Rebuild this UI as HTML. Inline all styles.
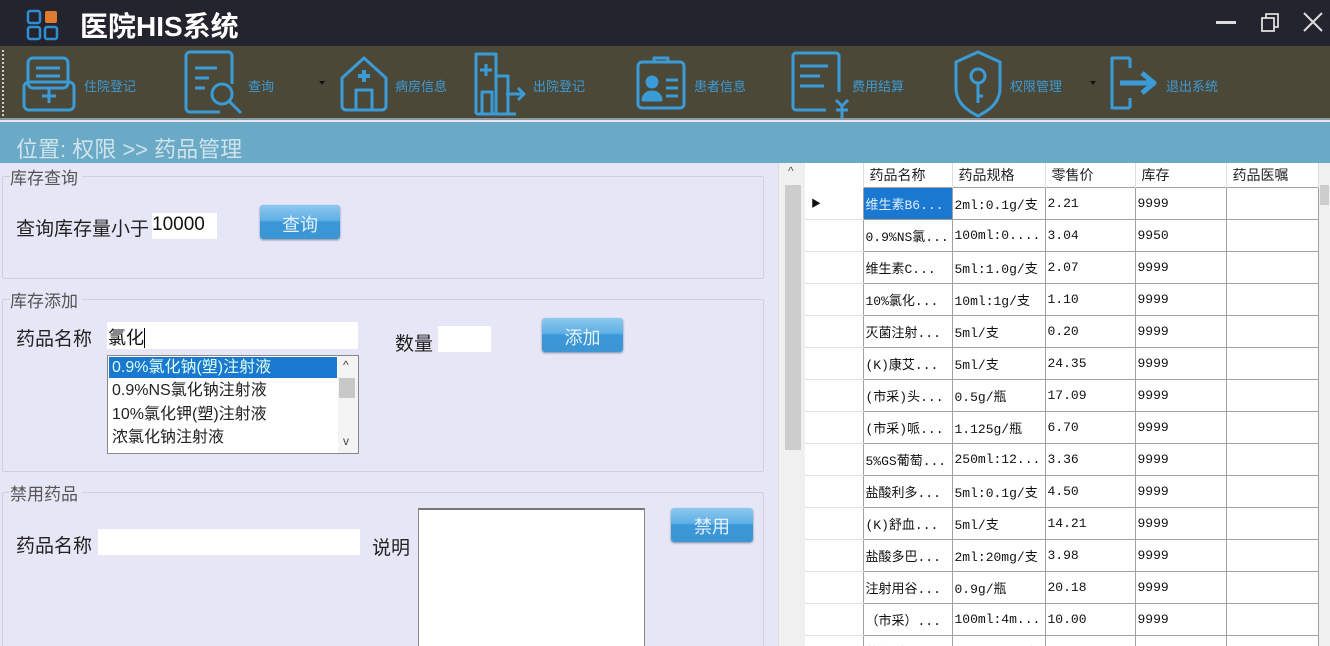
<!DOCTYPE html>
<html><head><meta charset="utf-8"><style>
*{margin:0;padding:0;box-sizing:border-box}
html,body{width:1330px;height:646px;overflow:hidden}
body{position:relative;font-family:"Liberation Sans","Noto Sans CJK SC",sans-serif;background:#e6e6f6}
.a{position:absolute}
#title{left:0;top:0;width:1330px;height:46px;background:#23242e}
#tb{left:0;top:46px;width:1330px;height:74px;background:#4b4838;border-bottom:2px solid #8a9aa0}
#bc{left:0;top:122px;width:1330px;height:41px;background:#6aaac6;color:#cfe3ec;font-size:22px;padding:10px 0 0 16px}
.tl{color:#3d9ad4;font-size:13px;position:absolute;top:76px}
.lbl{font-size:19px;color:#222;position:absolute}
.inp{position:absolute;background:#fff}
.btn{position:absolute;background:linear-gradient(#8cc8ee 0%,#5fb0e6 45%,#3b97d8 50%,#3c96d4 100%);border-radius:3px;color:#e8f2fa;font-size:18px;text-align:center;box-shadow:0 1px 2px #7a8aa0}
.grp{position:absolute;border:1px solid #cfd0e0;border-radius:2px}
.gt{position:absolute;font-size:17px;color:#555;background:#e6e6f6;padding-right:4px}
table{border-collapse:collapse;position:absolute;left:805px;top:163px;font-family:"Liberation Mono","Noto Sans CJK SC",monospace;font-size:13px}
td{border:1px solid #a0a0a0;height:32px;background:#fff;padding-left:2px;white-space:nowrap;color:#111}
th{height:24px;font-weight:normal;text-align:left;padding-left:6px;font-family:"Liberation Sans","Noto Sans CJK SC",sans-serif;font-size:14px;background:#fff;border-right:1px solid #ddd;color:#222}
td.rh{border:none;border-bottom:1px solid #e0e0e0;background:#fff}
</style></head><body>
<div id="title" class="a">
<svg class="a" style="left:26px;top:9px" width="34" height="32"><g fill="none" stroke="#2f8ecf" stroke-width="2.5"><rect x="2" y="2" width="12" height="12" rx="2"/><rect x="2" y="18" width="12" height="12" rx="2"/><rect x="19" y="18" width="12" height="12" rx="2"/></g><rect x="19" y="2" width="12" height="12" rx="2" fill="#e07a30"/></svg>
<div class="a" style="left:80px;top:5px;color:#fff;font-size:28px;font-weight:bold">医院HIS系统</div>
<div class="a" style="left:1216px;top:21px;width:20px;height:3px;background:#ddd"></div>
<svg class="a" style="left:1260px;top:11px" width="20" height="22"><g fill="none" stroke="#ddd" stroke-width="1.8"><rect x="2" y="7" width="12" height="13"/><path d="M6 7V3h12v13h-4"/></g></svg>
<svg class="a" style="left:1302px;top:11px" width="22" height="22"><path d="M2 2L20 20M20 2L2 20" stroke="#ddd" stroke-width="2"/></svg>
</div>
<div id="tb" class="a">
<div class="a" style="left:2px;top:4px;width:3px;height:66px;border-left:2px dotted #ccc"></div>
<svg class="a" style="left:0;top:0" width="1330" height="74"><g fill="none" stroke="#3a9bd6" stroke-width="3" stroke-linejoin="round">
<rect x="28" y="12" width="40" height="30" rx="5"/><path d="M36 22h24M36 30h24"/><rect x="24" y="36" width="50" height="28" rx="5"/><path d="M49 43v14M42 50h14"/>
<path d="M220 66h-30a4 4 0 0 1-4-4V10a4 4 0 0 1 4-4h38a4 4 0 0 1 4 4v28"/><path d="M195 22h22M195 32h14M195 42h10"/><circle cx="222" cy="48" r="10"/><path d="M229 55l12 12"/>
<path d="M342 32l22-20 22 20v28a4 4 0 0 1-4 4h-36a4 4 0 0 1-4-4z"/><rect x="356" y="44" width="16" height="20"/><path d="M364 24v12M358 30h12" stroke-width="4"/>
<path d="M476 68V8h20v60M496 30h12v38M476 68h40"/><path d="M486 18v12M480 24h12"/><rect x="482" y="46" width="10" height="22"/><path d="M506 48h18M518 42l6 6-6 6"/>
<rect x="638" y="16" width="46" height="46" rx="4"/><circle cx="652" cy="36" r="5" fill="#3a9bd6"/><path d="M643 54a9 8 0 0 1 18 0z" fill="#3a9bd6"/><path d="M666 34h12M666 42h12M666 50h12"/><path d="M654 16v-4h14v4"/>
<path d="M826 64h-30a3 3 0 0 1-3-3V10a3 3 0 0 1 3-3h40a3 3 0 0 1 3 3v36"/><path d="M800 20h28M800 30h20M800 40h24"/><path d="M836 54l6 6 6-6M842 60v12M836 64h12"/>
<path d="M978 6l22 10v26c0 14-10 22-22 28-12-6-22-14-22-28V16z"/><circle cx="978" cy="30" r="7"/><path d="M978 37v20M978 50h5"/>
<path d="M1130 12h-18v50h18M1130 12v10M1130 62v-10"/><path d="M1120 37h30M1142 27l12 10-12 10" stroke-width="5"/>
</g><path d="M319 35h6l-3 4z M1090 35h6l-3 4z" fill="#111"/></svg>
<span class="tl" style="left:84px;top:30px">住院登记</span>
<span class="tl" style="left:248px;top:30px">查询</span>
<span class="tl" style="left:395px;top:30px">病房信息</span>
<span class="tl" style="left:533px;top:30px">出院登记</span>
<span class="tl" style="left:694px;top:30px">患者信息</span>
<span class="tl" style="left:852px;top:30px">费用结算</span>
<span class="tl" style="left:1010px;top:30px">权限管理</span>
<span class="tl" style="left:1166px;top:30px">退出系统</span>
</div>
<div id="bc" class="a">位置:&nbsp;权限 &gt;&gt; 药品管理</div>

<div class="grp" style="left:2px;top:176px;width:762px;height:103px"></div>
<div class="gt" style="left:10px;top:164px">库存查询</div>
<div class="lbl" style="left:16px;top:214px">查询库存量小于</div>
<div class="inp" style="left:152px;top:213px;width:65px;height:26px;font-size:19px;padding-top:1px;color:#111">10000</div>
<div class="btn" style="left:260px;top:205px;width:80px;height:34px;padding-top:6px">查询</div>

<div class="grp" style="left:2px;top:299px;width:762px;height:173px"></div>
<div class="gt" style="left:10px;top:287px">库存添加</div>
<div class="lbl" style="left:16px;top:324px">药品名称</div>
<div class="inp" style="left:107px;top:322px;width:251px;height:27px;font-size:18px;padding:2px 0 0 1px;color:#111">氯化<span style="border-left:1px solid #000"></span></div>
<div class="inp" style="left:107px;top:355px;width:252px;height:99px;border:1px solid #888;font-size:16px;line-height:23.5px;color:#222">
<div style="background:#1a78d0;color:#dfe;width:228px;margin:1px;padding-left:3px;line-height:21px">0.9%氯化钠(塑)注射液</div>
<div style="padding-left:4px">0.9%NS氯化钠注射液</div>
<div style="padding-left:4px">10%氯化钾(塑)注射液</div>
<div style="padding-left:4px">浓氯化钠注射液</div>
<div class="a" style="left:230px;top:0;width:20px;height:97px;background:#f4f4f4"></div>
<div class="a" style="left:231px;top:22px;width:16px;height:20px;background:#c8c8c8"></div>
<div class="a" style="left:235px;top:-2px;font-size:12px;color:#444">^</div>
<div class="a" style="left:235px;top:74px;font-size:12px;color:#444">v</div>
</div>
<div class="lbl" style="left:395px;top:329px">数量</div>
<div class="inp" style="left:438px;top:326px;width:53px;height:26px"></div>
<div class="btn" style="left:542px;top:318px;width:81px;height:34px;padding-top:6px">添加</div>

<div class="grp" style="left:2px;top:492px;width:762px;height:160px"></div>
<div class="gt" style="left:10px;top:480px">禁用药品</div>
<div class="lbl" style="left:16px;top:531px">药品名称</div>
<div class="inp" style="left:98px;top:529px;width:262px;height:26px"></div>
<div class="lbl" style="left:372px;top:533px">说明</div>
<div class="inp" style="left:418px;top:508px;width:227px;height:140px;border:1px solid #888;border-top:2px solid #777"></div>
<div class="btn" style="left:671px;top:508px;width:82px;height:34px;padding-top:5px">禁用</div>

<div class="a" style="left:778px;top:163px;width:27px;height:483px;background:#f0f0f0;border-left:1px solid #ddd"></div>
<div class="a" style="left:785px;top:185px;width:16px;height:265px;background:#cdcdcd"></div>
<div class="a" style="left:788px;top:164px;font-size:12px;color:#555">^</div>
<div class="a" style="left:1318px;top:163px;width:12px;height:483px;background:#f0f0f0"></div>
<div class="a" style="left:1320px;top:185px;width:9px;height:20px;background:#cdcdcd"></div>

<table>
<tr><th style="width:58px"></th><th style="width:89px">药品名称</th><th style="width:93px">药品规格</th><th style="width:90px">零售价</th><th style="width:91px">库存</th><th style="width:92px">药品医嘱</th></tr>
<tr><td class="rh" style="padding-left:6px;font-size:10px">▶</td><td style="background:#1a78d0;color:#dfeefa">维生素B6...</td><td>2ml:0.1g/支</td><td>2.21</td><td>9999</td><td></td></tr>
<tr><td class="rh"></td><td>0.9%NS氯...</td><td>100ml:0....</td><td>3.04</td><td>9950</td><td></td></tr>
<tr><td class="rh"></td><td>维生素C...</td><td>5ml:1.0g/支</td><td>2.07</td><td>9999</td><td></td></tr>
<tr><td class="rh"></td><td>10%氯化...</td><td>10ml:1g/支</td><td>1.10</td><td>9999</td><td></td></tr>
<tr><td class="rh"></td><td>灭菌注射...</td><td>5ml/支</td><td>0.20</td><td>9999</td><td></td></tr>
<tr><td class="rh"></td><td>(K)康艾...</td><td>5ml/支</td><td>24.35</td><td>9999</td><td></td></tr>
<tr><td class="rh"></td><td>(市采)头...</td><td>0.5g/瓶</td><td>17.09</td><td>9999</td><td></td></tr>
<tr><td class="rh"></td><td>(市采)哌...</td><td>1.125g/瓶</td><td>6.70</td><td>9999</td><td></td></tr>
<tr><td class="rh"></td><td>5%GS葡萄...</td><td>250ml:12...</td><td>3.36</td><td>9999</td><td></td></tr>
<tr><td class="rh"></td><td>盐酸利多...</td><td>5ml:0.1g/支</td><td>4.50</td><td>9999</td><td></td></tr>
<tr><td class="rh"></td><td>(K)舒血...</td><td>5ml/支</td><td>14.21</td><td>9999</td><td></td></tr>
<tr><td class="rh"></td><td>盐酸多巴...</td><td>2ml:20mg/支</td><td>3.98</td><td>9999</td><td></td></tr>
<tr><td class="rh"></td><td>注射用谷...</td><td>0.9g/瓶</td><td>20.18</td><td>9999</td><td></td></tr>
<tr><td class="rh"></td><td>（市采）...</td><td>100ml:4m...</td><td>10.00</td><td>9999</td><td></td></tr>
<tr><td class="rh"></td><td>盐酸哌...</td><td>2ml:50mg/支</td><td>5.00</td><td>9999</td><td></td></tr>
</table>
</body></html>
